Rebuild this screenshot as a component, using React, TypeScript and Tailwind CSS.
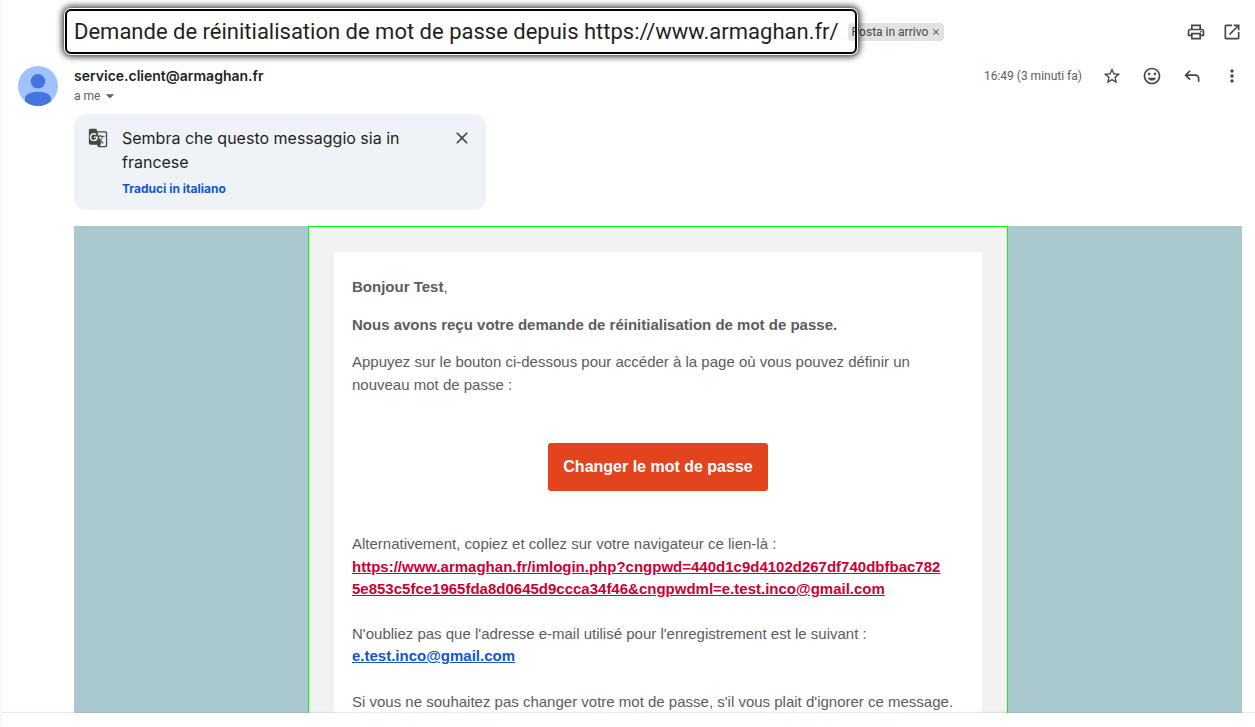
import type { ReactNode } from 'react'
import {
  MdArrowDropDown,
  MdClose,
  MdGTranslate,
  MdInsertEmoticon,
  MdMoreVert,
  MdStarBorder,
} from 'react-icons/md'

const RESET_URL =
  'https://www.armaghan.fr/imlogin.php?cngpwd=440d1c9d4102d267df740dbfbac7825e853c5fce1965fda8d0645d9ccca34f46&cngpwdml=e.test.inco@gmail.com'

// Material Symbols outlines that react-icons does not ship.
const PRINT =
  'M640-640v-120H320v120h-80v-200h480v200h-80Zm80 180q17 0 28.5-11.5T760-500q0-17-11.5-28.5T720-540q-17 0-28.5 11.5T680-500q0 17 11.5 28.5T720-460Zm-80 260v-160H320v160h320Zm80 80H240v-160H80v-240q0-51 35-85.5t85-34.5h560q51 0 85.5 34.5T880-520v240H720v160Zm80-240v-160q0-17-11.5-28.5T760-560H200q-17 0-28.5 11.5T160-520v160h80v-80h480v80h80Z'
const OPEN =
  'M200-120q-33 0-56.5-23.5T120-200v-560q0-33 23.5-56.5T200-840h280v80H200v560h560v-280h80v280q0 33-23.5 56.5T760-120H200Zm188-212-56-56 372-372H560v-80h280v280h-80v-144L388-332Z'
const REPLY =
  'M760-200v-160q0-50-35-85t-85-35H273l144 144-57 56-240-240 240-240 57 56-144 144h367q83 0 141.5 58.5T840-360v160h-80Z'

function Symbol({ d }: { d: string }) {
  return (
    <svg viewBox="0 -960 960 960" width={20} height={20} fill="currentColor" aria-hidden="true">
      <path d={d} />
    </svg>
  )
}

function IconButton({ label, children }: { label: string; children: ReactNode }) {
  return (
    <button type="button" aria-label={label} className="size-5 shrink-0 text-[#444746]">
      {children}
    </button>
  )
}

function Avatar() {
  return (
    <svg viewBox="0 0 40 40" className="size-10 shrink-0" aria-hidden="true">
      <clipPath id="avatar">
        <circle cx="20" cy="20" r="20" />
      </clipPath>
      <g clipPath="url(#avatar)">
        <rect width="40" height="40" fill="#a0c3ff" />
        <circle cx="20" cy="15.3" r="7.3" fill="#4374e0" />
        <path d="M7 40v-7.5C7 28 13 25.7 20 25.7S33 28 33 32.500V40Z" fill="#4374e0" />
      </g>
    </svg>
  )
}

function SubjectBar() {
  return (
    <div className="flex items-center pt-[9px] pl-[63px]">
      <h1 className="relative z-10 rounded-md border-2 border-black py-[7px] pr-4 pl-[7px] font-[Roboto,sans-serif] text-[22px] leading-[27px] whitespace-nowrap text-[#1f1f1f] shadow-[0_0_0_1px_#fff,0_0_6px_3px_rgba(0,0,0,0.75)]">
        Demande de réinitialisation de mot de passe depuis https://www.armaghan.fr/
      </h1>
      <div className="-ml-[9px] flex h-[18px] items-center rounded bg-[#e1e3e1] pl-1 font-[Roboto,sans-serif] text-xs text-[#444746]">
        <span>Posta in arrivo</span>
        <button type="button" aria-label="Rimuovi etichetta" className="px-[3px]">
          <MdClose size={10} />
        </button>
      </div>
      <div className="ml-auto flex gap-4">
        <IconButton label="Stampa tutto">
          <Symbol d={PRINT} />
        </IconButton>
        <IconButton label="Apri in una nuova finestra">
          <Symbol d={OPEN} />
        </IconButton>
      </div>
    </div>
  )
}

function SenderRow() {
  return (
    <div className="flex gap-4 pt-3 pl-4">
      <Avatar />
      <div className="flex flex-1 flex-col">
        <div className="flex h-5 items-center justify-between">
          <span className="text-sm font-semibold text-[#1f1f1f]">service.client@armaghan.fr</span>
          <div className="flex items-center gap-5">
            <span className="font-[Roboto,sans-serif] text-xs text-[#5e5e5e]">
              16:49 (3 minuti fa)
            </span>
            <IconButton label="Speciale">
              <MdStarBorder size={20} />
            </IconButton>
            <IconButton label="Aggiungi reazione">
              <MdInsertEmoticon size={20} />
            </IconButton>
            <IconButton label="Rispondi">
              <Symbol d={REPLY} />
            </IconButton>
            <IconButton label="Altro">
              <MdMoreVert size={20} />
            </IconButton>
          </div>
        </div>
        <button
          type="button"
          className="flex h-5 items-center self-start font-[Roboto,sans-serif] text-xs text-[#5e5e5e]"
        >
          a me
          <MdArrowDropDown size={20} />
        </button>
      </div>
    </div>
  )
}

function TranslateBanner() {
  return (
    <div className="mt-2 flex max-w-[412px] items-start rounded-xl bg-[#eff3f8] px-3.5 py-3">
      <MdGTranslate size={20} className="mt-0.5 shrink-0 text-[#444746]" />
      <div className="ml-3.5 flex-1 pr-10">
        <p className="text-base text-[#1f1f1f]">Sembra che questo messaggio sia in francese</p>
        <button type="button" className="mt-1.5 block text-xs leading-[18px] font-bold text-[#0b57d0]">
          Traduci in italiano
        </button>
      </div>
      <button type="button" aria-label="Chiudi" className="mt-0.5 text-[#444746]">
        <MdClose size={20} />
      </button>
    </div>
  )
}

function MailBody() {
  return (
    <article className="mt-4 bg-[#a9c9ce] font-['Liberation_Sans',Arial,sans-serif] text-[15px] leading-normal text-[#5c5c5c]">
      <div className="mx-auto max-w-[700px] border border-[#00ff00] bg-[#f2f2f2] p-[25px]">
        <div className="bg-white px-[18px] py-6">
          <p>
            <b>Bonjour Test</b>,
          </p>
          <p className="mt-[15px] font-bold">
            Nous avons reçu votre demande de réinitialisation de mot de passe.
          </p>
          <p className="mt-[15px]">
            Appuyez sur le bouton ci-dessous pour accéder à la page où vous pouvez définir un
            nouveau mot de passe :
          </p>
          <a
            href="#reset"
            className="mx-auto mt-[47px] block w-fit rounded-[3px] bg-[#e2451e] px-[15px] py-3 text-base font-bold text-white"
          >
            Changer le mot de passe
          </a>
          <p className="mt-[42px] pr-5">
            Alternativement, copiez et collez sur votre navigateur ce lien-là :
            <br />
            <a href="#reset-link" className="font-bold break-all text-[#cc0033] underline">
              {RESET_URL}
            </a>
          </p>
          <p className="mt-[22px]">
            N'oubliez pas que l'adresse e-mail utilisé pour l'enregistrement est le suivant :
            <br />
            <a href="mailto:e.test.inco@gmail.com" className="font-bold text-[#1155cc] underline">
              e.test.inco@gmail.com
            </a>
          </p>
          <p className="mt-[23px]">
            Si vous ne souhaitez pas changer votre mot de passe, s'il vous plait d'ignorer ce message.
          </p>
        </div>
      </div>
    </article>
  )
}

export default function App() {
  return (
    <div className="flex h-screen flex-col overflow-hidden border-l-2 border-[#f6f8fc] bg-white font-[Inter,Roboto,sans-serif]">
      <main className="min-h-0 flex-1 overflow-hidden pr-[13px]">
        <SubjectBar />
        <SenderRow />
        <div className="pl-[72px]">
          <TranslateBanner />
          <MailBody />
        </div>
      </main>
      <footer className="relative h-3.5 shrink-0 bg-white shadow-[0_-1px_1px_rgba(100,121,143,0.15)]" />
    </div>
  )
}
